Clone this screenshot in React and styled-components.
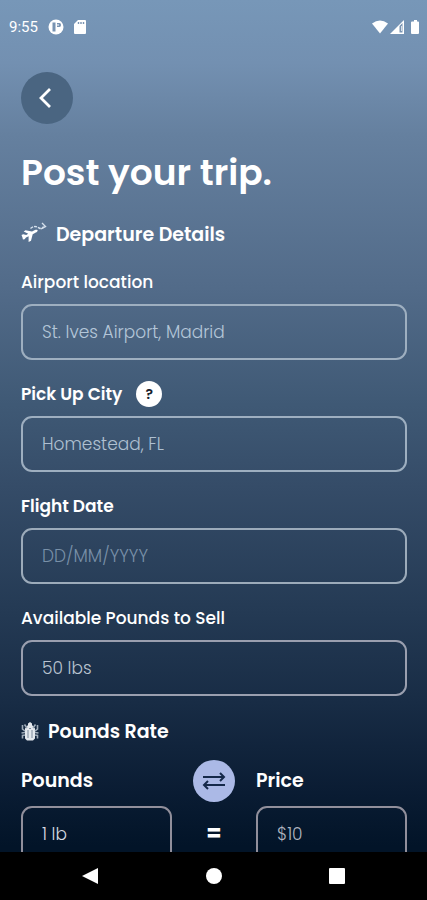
import React from "react";
import styled, { createGlobalStyle } from "styled-components";

const GlobalStyle = createGlobalStyle`
  *, *::before, *::after { box-sizing: border-box; }
  body { margin: 0; background: #000; }
  button, input { font: inherit; }
`;

const Screen = styled.div`
  display: flex;
  flex-direction: column;
  height: 100vh;
  overflow: hidden;
  color: #fff;
  font-family: "Poppins", "Inter", "Liberation Sans", sans-serif;
  background: linear-gradient(
    180deg,
    #7797b8 0%,
    #7390b1 7%,
    #65809f 15%,
    #526b89 32%,
    #3f5975 45%,
    #354c68 54%,
    #243a54 68%,
    #182c45 78%,
    #0a1c33 88%,
    #021428 94%
  );
`;

const StatusBar = styled.header`
  display: flex;
  align-items: center;
  justify-content: space-between;
  flex: none;
  height: 54px;
  padding: 0 7px 0 9px;
  font: 400 15px/20px Roboto, sans-serif;
`;

const StatusGroup = styled.div`
  display: flex;
  align-items: center;
  gap: ${(p) => p.$gap}px;
`;

const Content = styled.main`
  flex: 1;
  min-height: 0;
  overflow-y: auto;
  scrollbar-width: none;
  padding: 18px 20px 24px 21px;
`;

const BackButton = styled.button`
  display: grid;
  place-items: center;
  width: 52px;
  height: 52px;
  padding: 0 4px 0 0;
  border: 0;
  border-radius: 50%;
  color: #fff;
  background: #4a6581;
`;

const Title = styled.h1`
  margin: 24px 0 0;
  font-size: 36px;
  line-height: 50px;
  font-weight: 600;
`;

const SectionTitle = styled.h2`
  display: flex;
  align-items: center;
  gap: 9px;
  margin: 24px 0 0;
  font-size: 19px;
  line-height: 24px;
  font-weight: 600;
`;

const Fields = styled.div`
  display: grid;
  gap: 21px;
  margin-top: 21px;
`;

const FieldGroup = styled.div`
  display: grid;
  gap: 9px;
`;

const LabelRow = styled.div`
  display: flex;
  align-items: center;
  gap: 14px;
  height: 26px;
`;

const Label = styled.label`
  font-size: 17px;
  line-height: 24px;
  font-weight: ${(p) => p.$weight};
`;

const TextInput = styled.input`
  width: 100%;
  min-width: 0;
  height: 56px;
  padding: 0 19px;
  border: 2px solid ${(p) => p.$edge};
  border-radius: 11px;
  outline: 0;
  color: #fff;
  background: transparent;
  font-size: 17px;
  font-weight: 300;

  &::placeholder {
    color: ${(p) => p.$tone};
    opacity: 1;
  }
`;

const HelpButton = styled.button`
  display: grid;
  place-items: center;
  width: 26px;
  height: 26px;
  padding: 0;
  border: 0;
  border-radius: 50%;
  color: #17212d;
  background: #fff;
  font-size: 14px;
  font-weight: 600;
`;

const RateGrid = styled.div`
  display: grid;
  grid-template-columns: 1fr 42px 1fr;
  align-items: center;
  column-gap: 21px;
  row-gap: 4px;
  margin-top: 16px;
`;

const RateLabel = styled.label`
  font-size: 19px;
  line-height: 24px;
  font-weight: 600;
`;

const SwapButton = styled.button`
  display: grid;
  place-items: center;
  width: 42px;
  height: 42px;
  padding: 0;
  border: 0;
  border-radius: 50%;
  color: #15294a;
  background: #abb9e6;
`;

const Equals = styled.span`
  font-size: 22px;
  line-height: 24px;
  font-weight: 700;
  text-align: center;
`;

const NavBar = styled.nav`
  display: grid;
  grid-template-columns: repeat(3, 123px);
  justify-content: center;
  flex: none;
  height: 48px;
  background: #000;
`;

const NavButton = styled.button`
  display: grid;
  place-items: center;
  padding: 0;
  border: 0;
  color: #fff;
  background: transparent;
`;

function PlaneIcon() {
  return (
    <svg width="26" height="26" viewBox="0 0 26 26" aria-hidden="true">
      <path
        d="M0.500 13l1.700-.8 3 .8 2-1.200-4.500-2.200 1.800-1.300 6.500 1.200 3-1.500c1.700-.7 3 0 2.600 1-.3.900-1.600 1.500-2.600 2l-2.300 1.200-1.700 6.500-2.400 1.200v-5.600l-2.600 1.300-1.400 1.700-1.700.3-.5-2.300z"
        fill="#fff"
      />
      <path d="M9.500 6.500C12.500 4 15 4 18 6C20 7 22 6.500 22.500 4.500" fill="none" stroke="#d7e2ee" strokeWidth="1.400" strokeDasharray="3 1" />
      <path d="M21 1L24.500 4.500L20 7" fill="none" stroke="#d5e0ec" strokeWidth="1.400" />
    </svg>
  );
}

function LuggageIcon() {
  return (
    <svg width="18" height="20" viewBox="0 0 18 20" aria-hidden="true">
      <path d="M7 3V1.500L9 0l2 1.500V3l3 3.500v10L12 18.500H6l-2-2v-10z" fill="#e3e8ed" />
      <path d="M7 8v8M11 8v8M8 6.500h2" fill="none" stroke="#7e8c9c" strokeWidth="1" />
      <path d="M1.500 3v4L4 9M16.500 3v4L14 9M0.500 11L4 10.500M17.500 11L14 10.500M1.500 16.500v-3L4 13M16.500 16.500v-3L14 13M3.500 2.500L6 6M14.500 2.500L12 6" fill="none" stroke="#9eabb8" strokeWidth="1.600" />
    </svg>
  );
}

function Field({ id, label, placeholder, weight = 500, tone, edge, children }) {
  return (
    <FieldGroup>
      <LabelRow>
        <Label htmlFor={id} $weight={weight}>{label}</Label>
        {children}
      </LabelRow>
      <TextInput id={id} placeholder={placeholder} $tone={tone} $edge={edge} />
    </FieldGroup>
  );
}

export default function App() {
  return (
    <>
      <GlobalStyle />
      <Screen>
        <StatusBar>
          <StatusGroup $gap={10}>
            <span>9:55</span>
            <svg width="16" height="16" viewBox="0 0 16 16" aria-hidden="true">
              <circle cx="8" cy="8" r="7.500" fill="#fff" />
              <path d="M4.500 3.500h3v9h-3zM9 4h2.500q1.500 0 1.500 2t-1.500 2H9z" fill="#7893b2" />
              <path d="M9.500 5h1v2h-1z" fill="#fff" />
            </svg>
            <svg width="12" height="14" viewBox="0 0 12 14" aria-hidden="true">
              <path d="M4 0h7q1 0 1 1v12q0 1-1 1H1q-1 0-1-1V4z" fill="#fff" />
              <path d="M4.500 2v2M7 2v2M9.500 2v2" stroke="#7893b2" strokeWidth="1.400" />
            </svg>
          </StatusGroup>
          <StatusGroup $gap={2}>
            <svg width="16" height="14" viewBox="0 0 16 14" aria-hidden="true">
              <path d="M0 3.500Q8-2.500 16 3.500L8 13.500z" fill="#fff" />
            </svg>
            <svg width="14" height="14" viewBox="0 0 14 14" aria-hidden="true">
              <path d="M0 14L14 0v14z" fill="#fff" />
              <path d="M9.500 6l3-3v9.500h-3z" fill="#7893b2" />
              <path d="M11.500 6v5" stroke="#d5dfe9" strokeWidth="1" />
            </svg>
            <svg width="14" height="14" viewBox="0 0 14 14" aria-hidden="true">
              <path d="M6 1.500h2V0h3v1.500h1q1 0 1 1V13q0 1-1 1H6q-1 0-1-1V2.500q0-1 1-1z" fill="#fff" />
            </svg>
          </StatusGroup>
        </StatusBar>

        <Content>
          <BackButton type="button" aria-label="Back">
            <svg width="14" height="22" viewBox="0 0 14 22" aria-hidden="true">
              <path d="M12 2L3 11l9 9" fill="none" stroke="currentColor" strokeWidth="2.800" />
            </svg>
          </BackButton>
          <Title>Post your trip.</Title>

          <SectionTitle>
            <PlaneIcon />
            Departure Details
          </SectionTitle>
          <Fields>
            <Field id="airport" label="Airport location" placeholder="St. Ives Airport, Madrid" tone="#b4c6d8" edge="#9eafc0" />
            <Field id="city" label="Pick Up City" weight={600} placeholder="Homestead, FL" tone="#afc0d1" edge="#9eafc0">
              <HelpButton type="button" aria-label="About pick up city">?</HelpButton>
            </Field>
            <Field id="date" label="Flight Date" weight={600} placeholder="DD/MM/YYYY" tone="#7990a8" edge="#9cabba" />
            <Field id="available" label="Available Pounds to Sell" placeholder="50 lbs" tone="#b9c3cf" edge="#9a9faf" />
          </Fields>

          <SectionTitle>
            <LuggageIcon />
            Pounds Rate
          </SectionTitle>
          <RateGrid>
            <RateLabel htmlFor="pounds">Pounds</RateLabel>
            <SwapButton type="button" aria-label="Swap pounds and price">
              <svg width="24" height="20" viewBox="0 0 24 20" fill="none" stroke="currentColor" strokeWidth="2" aria-hidden="true">
                <path d="M1 6h21M18 2l4 4-4 4M23 14H2M6 10l-4 4 4 4" />
              </svg>
            </SwapButton>
            <RateLabel htmlFor="price">Price</RateLabel>
            <TextInput id="pounds" placeholder="1 lb" $tone="#d5dae0" $edge="#918f9b" />
            <Equals>=</Equals>
            <TextInput id="price" placeholder="$10" $tone="#b0b6c0" $edge="#918f9b" />
          </RateGrid>
        </Content>

        <NavBar aria-label="System navigation">
          <NavButton type="button" aria-label="Back">
            <svg width="18" height="18" viewBox="0 0 18 18"><path d="M0 9L16 1v16z" fill="currentColor" /></svg>
          </NavButton>
          <NavButton type="button" aria-label="Home">
            <svg width="16" height="16" viewBox="0 0 16 16"><circle cx="8" cy="8" r="8" fill="currentColor" /></svg>
          </NavButton>
          <NavButton type="button" aria-label="Overview">
            <svg width="16" height="16" viewBox="0 0 16 16"><rect width="16" height="16" rx="1" fill="currentColor" /></svg>
          </NavButton>
        </NavBar>
      </Screen>
    </>
  );
}
